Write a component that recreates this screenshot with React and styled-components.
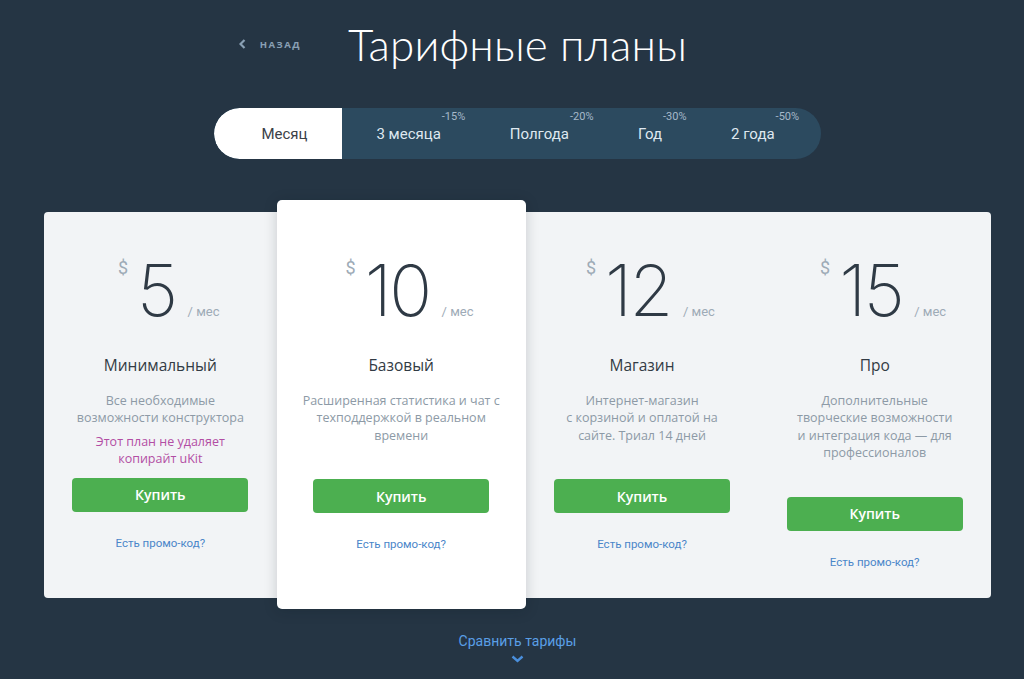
import React from "react";
import styled, { createGlobalStyle } from "styled-components";

const GlobalStyle = createGlobalStyle`
  html, body {
    margin: 0;
    padding: 0;
    background: #253544;
  }
  body {
    font-family: "Open Sans", "Liberation Sans", sans-serif;
    -webkit-font-smoothing: antialiased;
  }
  * { box-sizing: border-box; }
`;

const Page = styled.div`
  min-height: 679px;
  padding-left: 11px;
  display: flex;
  flex-direction: column;
  align-items: center;
`;

const Header = styled.header`
  width: 100%;
  margin-top: 16px;
  display: grid;
  grid-template-columns: 1fr auto 1fr;
  align-items: center;
`;

const BackLink = styled.a`
  justify-self: end;
  margin-right: 47px;
  display: flex;
  align-items: center;
  gap: 14px;
  color: #8aa0b4;
  font-family: "Open Sans", "Liberation Sans", sans-serif;
  font-size: 9.5px;
  font-weight: 700;
  letter-spacing: 1.5px;
  text-decoration: none;
  cursor: pointer;
`;

const Title = styled.h1`
  margin: 0;
  font-family: "Lato", "Liberation Sans", sans-serif;
  font-weight: 300;
  font-size: 44px;
  line-height: 56px;
  color: #ffffff;
  letter-spacing: 0.2px;
`;

const Tabs = styled.nav`
  margin-top: 36px;
  height: 51px;
  display: flex;
  border-radius: 26px;
  background: #2c4a5f;
  overflow: hidden;
`;

const Tab = styled.button`
  flex: 0 0 auto;
  border: 0;
  padding: 0 34.5px;
  display: flex;
  align-items: center;
  white-space: nowrap;
  background: ${(p) => (p.$active ? "#ffffff" : "transparent")};
  color: ${(p) => (p.$active ? "#3a4148" : "#dfe8f0")};
  font-family: "Roboto", "Liberation Sans", sans-serif;
  font-size: 15px;
  cursor: pointer;

  &:first-child {
    padding-left: 47px;
    border-radius: 26px 0 0 26px;
  }
  &:last-child {
    padding-right: 46px;
  }
`;

const TabLabel = styled.span`
  position: relative;
  display: inline-block;
  white-space: nowrap;
`;

const Discount = styled.span`
  position: absolute;
  left: 100%;
  top: -15px;
  margin-left: 1px;
  font-size: 11px;
  color: #a6b9ca;
  white-space: nowrap;
`;

const Panel = styled.section`
  width: 947px;
  margin-top: 53px;
  display: flex;
  background: #f2f4f6;
  border-radius: 4px;
`;

const Plan = styled.article`
  flex: ${(p) => (p.$featured ? "0 0 249px" : "1 1 0")};
  display: flex;
  flex-direction: column;
  align-items: center;
  text-align: center;
  padding: ${(p) => (p.$featured ? "54px 0 39px" : "42px 0 28px")};
  margin: ${(p) => (p.$featured ? "-12px 0 -11px" : "0")};
  background: ${(p) => (p.$featured ? "#ffffff" : "transparent")};
  border-radius: ${(p) => (p.$featured ? "5px" : "0")};
  box-shadow: ${(p) => (p.$featured ? "0 2px 14px rgba(10, 20, 30, 0.18)" : "none")};
`;

const Price = styled.div`
  display: flex;
  align-items: baseline;
`;

const Currency = styled.span`
  align-self: flex-start;
  width: 44px;
  margin-top: 5px;
  padding-right: 9px;
  text-align: right;
  font-family: "Roboto", "Liberation Sans", sans-serif;
  font-size: 18px;
  line-height: 1;
  color: #9eabb7;
`;

const Amount = styled.span`
  font-family: "Inter", "Lato", "Liberation Sans", sans-serif;
  font-weight: 200;
  font-size: 71px;
  line-height: 72px;
  letter-spacing: -2.5px;
  font-feature-settings: "pnum" 1;
  color: #2f3a45;
`;

const Period = styled.span`
  width: 52px;
  padding-left: 12px;
  text-align: left;
  font-family: "Roboto", "Liberation Sans", sans-serif;
  font-size: 13px;
  color: #9eabb7;
`;

const PlanName = styled.h2`
  margin: 28px 0 0;
  font-size: 15.5px;
  line-height: 22px;
  font-weight: 500;
  color: #323b44;
`;

const Description = styled.p`
  margin: 16px 0 0;
  font-size: 12.5px;
  line-height: 17.4px;
  color: #8d9aa6;
`;

const Note = styled.p`
  margin: 6px 0 -24px;
  font-size: 12.5px;
  line-height: 17px;
  color: #b24ea4;
`;

const BuyButton = styled.button`
  margin-top: 35px;
  width: 176px;
  height: 34px;
  border: 0;
  border-radius: 4px;
  background: #4caf50;
  color: #ffffff;
  font-family: "Open Sans", "Liberation Sans", sans-serif;
  font-size: 14px;
  font-weight: 600;
  cursor: pointer;
`;

const PromoLink = styled.a`
  margin-top: 24px;
  font-family: "Roboto", "Liberation Sans", sans-serif;
  font-size: 11.5px;
  line-height: 15px;
  color: #4a86c9;
  cursor: pointer;
`;

const Compare = styled.a`
  margin-top: 34px;
  display: flex;
  flex-direction: column;
  align-items: center;
  gap: 5px;
  font-family: "Roboto", "Liberation Sans", sans-serif;
  font-size: 14px;
  line-height: 18px;
  color: #5a9fe6;
  cursor: pointer;
`;

const ChevronLeft = () => (
  <svg width="7" height="10" viewBox="0 0 7 10" aria-hidden="true">
    <polyline points="5.5,1 1.5,5 5.5,9" fill="none" stroke="#8aa0b4" strokeWidth="2.2" />
  </svg>
);

const ChevronDown = () => (
  <svg width="13" height="8" viewBox="0 0 13 8" aria-hidden="true">
    <polyline points="1.5,1.5 6.5,6 11.5,1.5" fill="none" stroke="#4a8fdc" strokeWidth="2.4" />
  </svg>
);

const periods = [
  { label: "Месяц", active: true },
  { label: "3 месяца", off: "-15%" },
  { label: "Полгода", off: "-20%" },
  { label: "Год", off: "-30%" },
  { label: "2 года", off: "-50%" },
];

const plans = [
  {
    price: "5",
    name: "Минимальный",
    desc: ["Все необходимые", "возможности конструктора"],
    note: ["Этот план не удаляет", "копирайт uKit"],
  },
  {
    price: "10",
    name: "Базовый",
    desc: ["Расширенная статистика и чат с", "техподдержкой в реальном", "времени"],
    featured: true,
  },
  {
    price: "12",
    name: "Магазин",
    desc: ["Интернет-магазин", "с корзиной и оплатой на", "сайте. Триал 14 дней"],
  },
  {
    price: "15",
    name: "Про",
    desc: ["Дополнительные", "творческие возможности", "и интеграция кода — для", "профессионалов"],
  },
];

const Lines = ({ lines }) =>
  lines.map((line, i) => (
    <React.Fragment key={i}>
      {i > 0 && <br />}
      {line}
    </React.Fragment>
  ));

export default function App() {
  return (
    <>
      <GlobalStyle />
      <Page>
        <Header>
          <BackLink>
            <ChevronLeft />
            НАЗАД
          </BackLink>
          <Title>Тарифные планы</Title>
          <div />
        </Header>

        <Tabs>
          {periods.map((p) => (
            <Tab key={p.label} $active={p.active}>
              <TabLabel>
                {p.label}
                {p.off && <Discount>{p.off}</Discount>}
              </TabLabel>
            </Tab>
          ))}
        </Tabs>

        <Panel>
          {plans.map((plan) => (
            <Plan key={plan.name} $featured={plan.featured}>
              <Price>
                <Currency>$</Currency>
                <Amount>{plan.price}</Amount>
                <Period>/ мес</Period>
              </Price>
              <PlanName>{plan.name}</PlanName>
              <Description>
                <Lines lines={plan.desc} />
              </Description>
              {plan.note && (
                <Note>
                  <Lines lines={plan.note} />
                </Note>
              )}
              <BuyButton>Купить</BuyButton>
              <PromoLink>Есть промо-код?</PromoLink>
            </Plan>
          ))}
        </Panel>

        <Compare>
          Сравнить тарифы
          <ChevronDown />
        </Compare>
      </Page>
    </>
  );
}
